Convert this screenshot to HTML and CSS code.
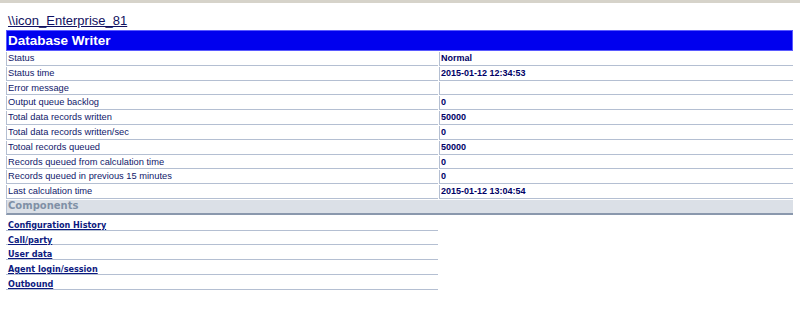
FILE: index.html
```html
<!DOCTYPE html>
<html>
<head>
<meta charset="utf-8">
<link rel="stylesheet" href="styles.css">
</head>
<body>
<div class="frame-top"></div>
<div class="page">
  <a class="host" href="#">\\icon_Enterprise_81</a>
  <div class="title">Database Writer</div>
  <table class="stats">
    <tr><td class="lbl">Status</td><td class="val">Normal</td></tr>
    <tr><td class="lbl">Status time</td><td class="val">2015-01-12 12:34:53</td></tr>
    <tr><td class="lbl">Error message</td><td class="val"></td></tr>
    <tr><td class="lbl">Output queue backlog</td><td class="val">0</td></tr>
    <tr><td class="lbl">Total data records written</td><td class="val">50000</td></tr>
    <tr><td class="lbl">Total data records written/sec</td><td class="val">0</td></tr>
    <tr><td class="lbl">Totoal records queued</td><td class="val">50000</td></tr>
    <tr><td class="lbl">Records queued from calculation time</td><td class="val">0</td></tr>
    <tr><td class="lbl">Records queued in previous 15 minutes</td><td class="val">0</td></tr>
    <tr><td class="lbl">Last calculation time</td><td class="val">2015-01-12 13:04:54</td></tr>
    <tr><td class="section" colspan="2">Components</td></tr>
  </table>
  <ul class="links">
    <li><a href="#">Configuration History</a></li>
    <li><a href="#">Call/party</a></li>
    <li><a href="#">User data</a></li>
    <li><a href="#">Agent login/session</a></li>
    <li><a href="#">Outbound</a></li>
  </ul>
</div>
</body>
</html>
```

FILE: styles.css
```css
html, body {
  margin: 0;
  padding: 0;
  background: #ffffff;
}
.frame-top {
  height: 3px;
  background: #d6d3ca;
}
.page {
  padding: 0 7px 0 6px;
  font-family: "Liberation Sans", Arial, sans-serif;
}
.host {
  display: block;
  margin: 10px 0 0 2px;
  font-size: 13px;
  line-height: 15px;
  color: #101060;
  text-decoration: underline;
  width: max-content;
}
.title {
  margin-top: 2px;
  height: 19px;
  line-height: 19px;
  background: #0000ee;
  border: 1px solid #5a5aff;
  color: #ffffff;
  font-weight: bold;
  font-size: 13.5px;
  padding-left: 1px;
}
.stats {
  border-collapse: separate;
  border-spacing: 1px 1px;
  margin: 0 -1px;
  width: calc(100% + 2px);
  table-layout: fixed;
}
.stats td {
  padding: 0 0 0 1px;
  height: 12.8px;
  line-height: 12.8px;
  font-size: 9.3px;
  color: #10186a;
  border-left: 1px solid #b4bfd2;
  border-bottom: 1px solid #b4bfd2;
  white-space: nowrap;
  overflow: hidden;
}
.stats td.lbl {
  width: 430px;
}
.stats td.val {
  font-weight: bold;
  color: #000066;
  font-size: 9px;
}
.stats td.section {
  background: #dbe0e7;
  border-bottom: 2px solid #8a98ad;
  font-family: "DejaVu Sans", Verdana, sans-serif;
  font-weight: bold;
  font-size: 10px;
  color: #8090a6;
}
.links {
  list-style: none;
  margin: 0;
  padding: 0;
  width: 432px;
}
.links li {
  height: 13.8px;
  line-height: 13.8px;
  border-bottom: 1px solid #b4bfd2;
  padding-left: 2px;
}
.links a {
  font-family: "DejaVu Sans Condensed", "DejaVu Sans", Verdana, sans-serif;
  font-weight: bold;
  font-size: 9px;
  color: #0c1a80;
  text-decoration: underline;
}
```
